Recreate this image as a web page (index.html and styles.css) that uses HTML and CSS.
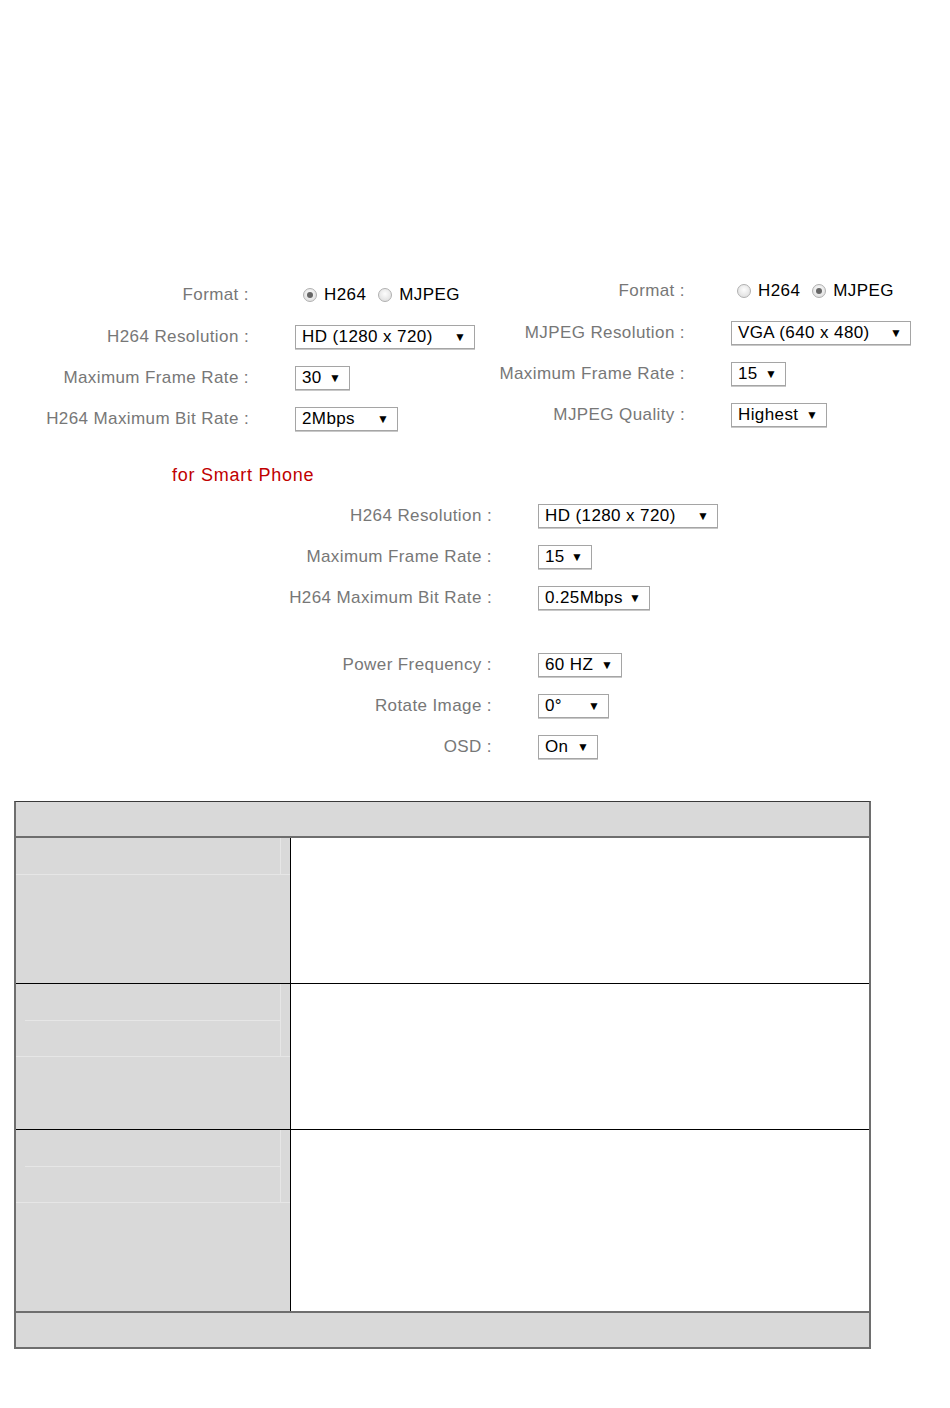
FILE: index.html
```html
<!DOCTYPE html>
<html>
<head>
  <title>Video Settings</title>
  <link rel="stylesheet" href="styles.css">
</head>
<body>
  <div class="page">
    <div class="streams">
      <div class="panel panel-left">
        <div class="label">Format :</div>
        <div class="radios">
          <span class="radio checked"></span><span class="opt">H264</span>
          <span class="radio"></span><span class="opt">MJPEG</span>
        </div>
        <div class="label">H264 Resolution :</div>
        <div class="sel sel-wide"><span>HD (1280 x 720)</span><span class="arrow">&#9660;</span></div>
        <div class="label">Maximum Frame Rate :</div>
        <div class="sel sel-num"><span>30</span><span class="arrow">&#9660;</span></div>
        <div class="label">H264 Maximum Bit Rate :</div>
        <div class="sel sel-rate"><span>2Mbps</span><span class="arrow">&#9660;</span></div>
      </div>

      <div class="panel panel-right">
        <div class="label">Format :</div>
        <div class="radios">
          <span class="radio"></span><span class="opt">H264</span>
          <span class="radio checked"></span><span class="opt">MJPEG</span>
        </div>
        <div class="label">MJPEG Resolution :</div>
        <div class="sel sel-wide"><span>VGA (640 x 480)</span><span class="arrow">&#9660;</span></div>
        <div class="label">Maximum Frame Rate :</div>
        <div class="sel sel-num"><span>15</span><span class="arrow">&#9660;</span></div>
        <div class="label">MJPEG Quality :</div>
        <div class="sel sel-quality"><span>Highest</span><span class="arrow">&#9660;</span></div>
      </div>
    </div>

    <div class="phone-title">for Smart Phone</div>

    <div class="panel panel-phone">
      <div class="label">H264 Resolution :</div>
      <div class="sel sel-wide"><span>HD (1280 x 720)</span><span class="arrow">&#9660;</span></div>
      <div class="label">Maximum Frame Rate :</div>
      <div class="sel sel-num2"><span>15</span><span class="arrow">&#9660;</span></div>
      <div class="label">H264 Maximum Bit Rate :</div>
      <div class="sel sel-phone-rate"><span>0.25Mbps</span><span class="arrow">&#9660;</span></div>
      <div class="spacer"></div>
      <div class="spacer"></div>
      <div class="label">Power Frequency :</div>
      <div class="sel sel-freq"><span>60 HZ</span><span class="arrow">&#9660;</span></div>
      <div class="label">Rotate Image :</div>
      <div class="sel sel-rotate"><span>0°</span><span class="arrow">&#9660;</span></div>
      <div class="label">OSD :</div>
      <div class="sel sel-osd"><span>On</span><span class="arrow">&#9660;</span></div>
    </div>

    <div class="spec">
      <div class="spec-head"></div>

      <div class="spec-row row-a">
        <div class="spec-key">
          <div class="sub">
            <div class="sub-inner">
              <div class="sub-line"></div>
            </div>
          </div>
        </div>
        <div class="spec-val"></div>
      </div>

      <div class="spec-row row-a">
        <div class="spec-key">
          <div class="sub">
            <div class="sub-inner">
              <div class="sub-line"></div>
              <div class="sub-line split"></div>
            </div>
          </div>
        </div>
        <div class="spec-val"></div>
      </div>

      <div class="spec-row row-b">
        <div class="spec-key">
          <div class="sub">
            <div class="sub-inner">
              <div class="sub-line"></div>
              <div class="sub-line split"></div>
            </div>
          </div>
        </div>
        <div class="spec-val"></div>
      </div>

      <div class="spec-foot"></div>
    </div>
  </div>
</body>
</html>
```

FILE: styles.css
```css
body {
  margin: 0;
  padding: 0;
  background: #fff;
  font-family: "Liberation Sans", Arial, sans-serif;
  font-size: 17px;
  letter-spacing: 0.4px;
}

.page {
  padding-top: 269px;
}

.streams {
  display: flex;
}

.panel {
  display: grid;
  column-gap: 46px;
  align-items: center;
}

.panel-left {
  grid-template-columns: 249px 180px;
  grid-template-rows: 43px 41px 41px 41px;
  padding-top: 4px;
}

.panel-right {
  grid-template-columns: 205px 180px;
  grid-template-rows: 43px 41px 41px 41px;
  margin-left: 5px;
}

.label {
  text-align: right;
  color: #777;
  white-space: nowrap;
}

.radios {
  display: flex;
  align-items: center;
  color: #000;
}

.radio {
  width: 14px;
  height: 14px;
  border-radius: 50%;
  box-sizing: border-box;
  border: 1px solid #b0b0b0;
  background: radial-gradient(circle at 50% 40%, #fdfdfd 0%, #dedede 85%);
  margin: 0 7px 0 8px;
  position: relative;
}

.panel-right .radio {
  margin-left: 6px;
}

.radio + .opt {
  margin-right: 4px;
}

.panel-right .radio + .opt {
  margin-right: 6px;
}

.radio.checked::after {
  content: "";
  position: absolute;
  left: 3px;
  top: 3px;
  width: 6px;
  height: 6px;
  border-radius: 50%;
  background: #666;
}

.sel {
  display: flex;
  justify-content: space-between;
  align-items: center;
  box-sizing: border-box;
  height: 24px;
  padding: 0 8px 0 6px;
  border: 1px solid #a5a5a5;
  box-shadow: 0 1px 0 #c8c8c8;
  color: #000;
  justify-self: start;
}

.arrow {
  font-size: 12px;
  letter-spacing: 0;
}

.sel-wide { width: 180px; }
.sel-num { width: 55px; }
.sel-num2 { width: 54px; }
.sel-rate { width: 103px; }
.sel-quality { width: 96px; }
.sel-phone-rate { width: 112px; }
.sel-freq { width: 84px; }
.sel-rotate { width: 71px; }
.sel-osd { width: 60px; }

.phone-title {
  margin: 26px 0 0 172px;
  line-height: 20px;
  font-size: 18px;
  letter-spacing: 0.75px;
  color: #c00000;
}

.panel-phone {
  grid-template-columns: 492px 180px;
  grid-template-rows: 41px 41px 41px 26px 41px 41px 41px;
  margin-top: 10px;
}

.spec {
  margin: 34px 0 0 14px;
  width: 857px;
  box-sizing: border-box;
  border: 2px solid #6e6e6e;
  border-top: 1px solid #3a3a3a;
}

.spec-head {
  height: 34px;
  background: #d9d9d9;
  border-bottom: 2px solid #6e6e6e;
}

.spec-row {
  display: grid;
  grid-template-columns: 275px 1fr;
  border-bottom: 1px solid #000;
}

.spec-row.row-a {
  height: 145px;
}

.spec-row.row-b {
  height: 181px;
  border-bottom: none;
}

.spec-key {
  background: #d9d9d9;
  border-right: 1px solid #000;
}

.spec-val {
  background: #fff;
}

.sub {
  border-bottom: 1px solid #e6e6e6;
}

.sub-inner {
  margin-right: 9px;
  border-right: 1px solid #e6e6e6;
}

.sub-line {
  height: 36px;
}

.sub-line.split {
  margin-left: 9px;
  border-top: 1px solid #e6e6e6;
  height: 35px;
}

.spec-foot {
  height: 34px;
  background: #d9d9d9;
  border-top: 2px solid #6e6e6e;
}
```
